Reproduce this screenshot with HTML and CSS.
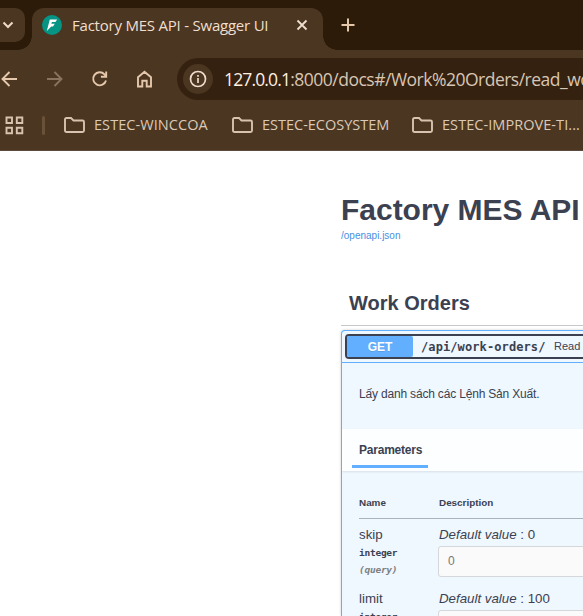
FILE: index.html
```html
<!DOCTYPE html>
<html lang="en">
<head>
<meta charset="utf-8">
<title>Factory MES API - Swagger UI</title>
<link rel="stylesheet" href="styles.css">
</head>
<body>
<header class="browser">
  <div class="tabstrip">
    <div class="tab-search"><svg width="12" height="8" viewBox="0 0 12 8"><path d="M1.500 1.500 6 6l4.500-4.500"/></svg></div>
    <div class="tab">
      <svg class="favicon" width="20" height="20" viewBox="0 0 20 20"><circle cx="10" cy="10" r="10"/><path d="M7.800 4.400h7.400L13.400 7h-3.500l-.6 1.700h3.500l-1.800 2.700H9.300L4.800 15.900z"/></svg>
      <span class="tab-title">Factory MES API - Swagger UI</span>
      <svg class="close" width="12" height="12" viewBox="0 0 12 12"><path d="m1.500 1.500 9 9m0-9-9 9"/></svg>
    </div>
    <svg class="plus" width="14" height="14" viewBox="0 0 14 14"><path d="M7 .5v13M.5 7h13"/></svg>
  </div>
  <div class="toolbar">
    <nav class="nav">
      <svg width="18" height="18" viewBox="0 0 18 18"><path d="M17 9H3M9.500 2l-7 7 7 7"/></svg>
      <svg class="disabled" width="18" height="18" viewBox="0 0 18 18"><path d="M2 9h14M9.500 2l7 7-7 7"/></svg>
      <svg width="18" height="18" viewBox="0 0 18 18"><path d="M16 10.500A6.500 6.500 0 1 1 14.500 4.400L16 6M16.200 1.500v5.300h-5.300"/></svg>
      <svg width="18" height="18" viewBox="0 0 18 18"><path d="M3 7.300l6.500-5.500L16 7.300v9.200h-4.300v-5.700H7.300v5.700H3z"/></svg>
    </nav>
    <div class="omnibox">
      <span class="info"><svg width="18" height="18" viewBox="0 0 18 18"><circle cx="9" cy="9" r="7.500"/><path d="M9 8v5M9 5v1.800"/></svg></span>
      <span class="url"><b>127.0.0.1</b>:8000/docs#/Work%20Orders/read_wo</span>
    </div>
  </div>
  <div class="bookmarks">
    <svg class="apps" width="19" height="19" viewBox="0 0 19 19"><path d="M1.500 1.500H7V7H1.500zM11.800 1.500h5.500V7h-5.500zM1.500 11.800H7v5.500H1.500zM11.800 11.800h5.500v5.500h-5.500z"/></svg>
    <i class="divider"></i>
    <div class="bookmark first"><svg width="21" height="16" viewBox="0 0 21 16"><path d="M1 2.500Q1 1 2.500 1H7l2.500 2.500h9Q20 3.500 20 5v8.500q0 1.500-1.500 1.500h-16Q1 15 1 13.500z"/></svg><span>ESTEC-WINCCOA</span></div>
    <div class="bookmark second"><svg width="21" height="16" viewBox="0 0 21 16"><path d="M1 2.500Q1 1 2.500 1H7l2.500 2.500h9Q20 3.500 20 5v8.500q0 1.500-1.500 1.500h-16Q1 15 1 13.500z"/></svg><span>ESTEC-ECOSYSTEM</span></div>
    <div class="bookmark"><svg width="21" height="16" viewBox="0 0 21 16"><path d="M1 2.500Q1 1 2.500 1H7l2.500 2.500h9Q20 3.500 20 5v8.500q0 1.500-1.500 1.500h-16Q1 15 1 13.500z"/></svg><span>ESTEC-IMPROVE-TI...</span></div>
  </div>
</header>
<main class="docs">
  <h1>Factory MES API</h1>
  <a class="spec">/openapi.json</a>
  <h2>Work Orders</h2>
  <section class="operation">
    <div class="summary">
      <div class="control"><span class="method">GET</span><span class="path">/api/work-orders/</span><span class="brief">Read</span></div>
    </div>
    <p class="description">Lấy danh sách các Lệnh Sản Xuất.</p>
    <div class="section-header"><h3>Parameters</h3></div>
    <div class="params">
      <div class="row head"><span>Name</span><span>Description</span></div>
      <div class="row">
        <div><div class="name">skip</div><div class="type">integer</div><div class="in">(query)</div></div>
        <div><div class="default"><i>Default value</i> : 0</div><div class="field">0</div></div>
      </div>
      <div class="row">
        <div><div class="name">limit</div><div class="type">integer</div></div>
        <div><div class="default"><i>Default value</i> : 100</div><div class="field"></div></div>
      </div>
    </div>
  </section>
</main>
</body>
</html>
```
FILE: styles.css
```css
* { box-sizing: border-box; }
html, body { margin: 0; width: 583px; height: 616px; overflow: hidden; background: #fff; }
body { font-family: "Liberation Sans", Arial, sans-serif; color: #3b4151; }
svg { display: block; flex: none; fill: none; stroke: #e5c8ac; stroke-width: 2; }
span { white-space: nowrap; }
.browser { height: 151px; background: #4b3621; border-bottom: 1px solid #5a4b3d; font-family: "Open Sans", "Noto Sans", sans-serif; }
.tabstrip { height: 50px; background: #2c1b09; display: flex; padding-top: 8px; }
.tab-search { width: 25px; height: 34px; background: #4b3621; border-radius: 0 10px 10px 0; padding: 13px 0 0 2px; }
.tab-search svg { stroke: #ecd9c7; }
.tab { position: relative; margin-left: 7px; width: 291px; height: 42px; background: #4b3621; border-radius: 12px 12px 0 0; display: flex; align-items: center; padding: 0 0 8px 10px; }
.tab::before, .tab::after { content: ""; position: absolute; bottom: 0; width: 14px; height: 14px; }
.tab::before { left: -14px; background: radial-gradient(circle at 0 0, transparent 13.500px, #4b3621 14px); }
.tab::after { right: -14px; background: radial-gradient(circle at 100% 0, transparent 13.500px, #4b3621 14px); }
.favicon { stroke: none; }
.favicon circle { fill: #069485; }
.favicon path { fill: #fff; }
.tab-title { margin-left: 10px; width: 198px; font-size: 15px; letter-spacing: -.22px; color: #f0dfce; }
.close { margin-left: 26px; stroke: #f0dfce; stroke-width: 1.800; }
.plus { margin: 10px 0 0 18px; }
.toolbar { height: 50px; display: flex; padding-top: 8px; }
.nav { width: 177px; display: flex; gap: 27px; padding-top: 12px; }
.nav svg { stroke-width: 1.900; }
.nav .disabled { stroke: #8a735e; }
.omnibox { flex: 1; height: 42px; min-width: 0; overflow: hidden; background: #34210f; border-radius: 21px 0 0 21px; display: flex; align-items: center; padding-left: 6px; }
.info { flex: none; width: 30px; height: 30px; border-radius: 50%; background: #4b3621; display: flex; align-items: center; justify-content: center; }
.info svg { stroke: #eedccb; stroke-width: 1.700; }
.url { margin-left: 11px; font-size: 17.500px; letter-spacing: -.5px; color: #d8c6b4; }
.url b { font-weight: 400; letter-spacing: -.85px; color: #fff0e2; }
.bookmarks { height: 50px; display: flex; align-items: center; padding-left: 5px; }
.apps, .bookmark svg { stroke: #d8c3b0; stroke-width: 1.900; }
.divider { width: 3px; height: 19px; border-radius: 2px; background: #69513a; margin: 0 19px 0 18px; }
.bookmark { display: flex; align-items: center; gap: 9px; color: #dbc9b7; font-size: 14.500px; letter-spacing: .06px; }
.bookmark span { margin-bottom: 2px; }
.bookmark.first, .bookmark.second { width: 168px; }
.bookmark.second { width: 180px; letter-spacing: -.01px; }
.docs { padding: 39px 0 0 341px; }
h1 { margin: 0; height: 40px; font-size: 30px; line-height: 39px; letter-spacing: -.02px; white-space: nowrap; }
.spec { display: block; height: 12px; font-size: 10px; line-height: 12px; color: #4990e2; }
h2 { margin: 45px 0 4px; height: 39px; padding: 2px 0 0 8px; font-size: 20px; line-height: 28px; border-bottom: 1px solid #c5c7cb; }
.operation { width: 260px; height: 286px; overflow: hidden; background: #eff7ff; border: 1px solid #61affe; border-bottom: 0; border-radius: 4px 0 0 0; box-shadow: 0 0 3px rgba(0,0,0,.19); }
.summary { height: 32px; padding: 3px; border-bottom: 1px solid #61affe; }
.control { height: 25px; border: 2px solid #3b4151; border-radius: 4px; display: flex; align-items: center; }
.control > span { flex: none; }
.method { width: 66px; height: 21px; background: #61affe; border-radius: 2px; color: #fff; font-size: 12px; font-weight: 700; line-height: 22px; text-align: center; text-shadow: 0 1px 0 rgba(0,0,0,.1); }
.path { margin-left: 8px; width: 133px; font: 700 12px "DejaVu Sans Mono", monospace; letter-spacing: .1px; }
.brief { margin-top: -1px; font-size: 11px; }
.description { margin: 0; height: 66px; padding: 22px 0 0 17px; font-size: 12px; line-height: 18px; letter-spacing: -.18px; white-space: nowrap; }
.section-header { height: 42px; padding-left: 10px; background: rgba(255,255,255,.8); box-shadow: 0 1px 2px rgba(0,0,0,.1); }
h3 { margin: 0; width: 76px; height: 39px; padding: 0 0 0 7px; border-bottom: 3px solid #61affe; font-size: 12px; line-height: 43px; letter-spacing: -.22px; }
.params { padding: 21px 0 0 17px; }
.row { display: grid; grid-template-columns: 79px 1fr; height: 64px; padding-top: 7px; }
.row.head { height: 27px; padding: 3px 0 0; border-bottom: 1px solid #a9b3be; font-size: 9.900px; font-weight: 700; line-height: 15px; }
.row.head span + span { padding-left: 1px; }
.name, .default { font-size: 13.300px; line-height: 17px; height: 19px; white-space: nowrap; }
.default { height: 20px; padding-left: 1px; }
.type { height: 17px; font: 700 9.500px/15px "DejaVu Sans Mono", monospace; letter-spacing: -.25px; }
.in { font: italic 700 9.500px/15px "DejaVu Sans Mono", monospace; letter-spacing: -.25px; color: #808080; }
.field { height: 31px; border: 1px solid #d5d7da; border-radius: 3px; background: #fafafa; padding-left: 9px; color: #777; font-size: 12px; line-height: 29px; }
```
